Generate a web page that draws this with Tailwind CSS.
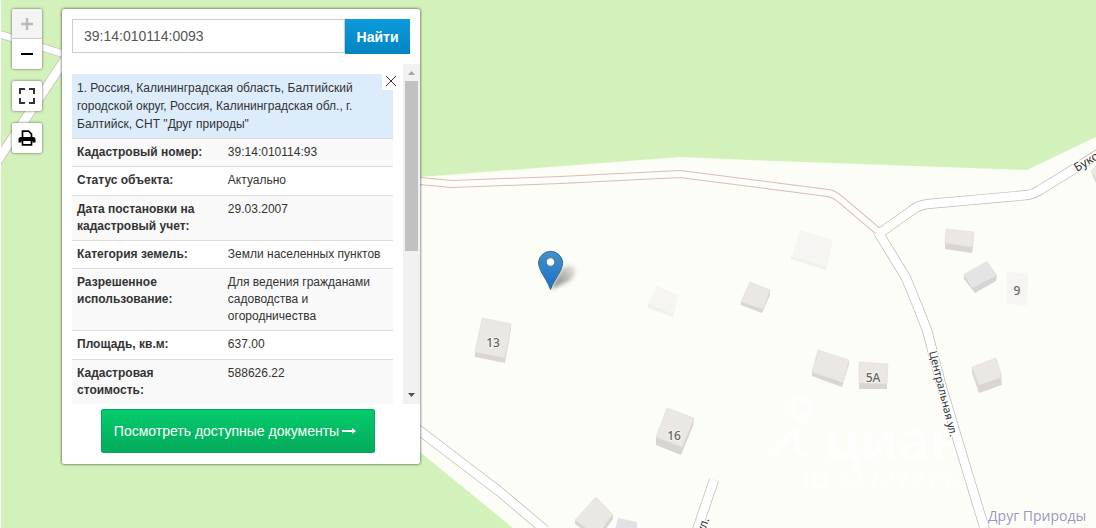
<!DOCTYPE html>
<html lang="ru">

<head>
  <meta charset="UTF-8">
  <meta name="viewport" content="width=device-width, initial-scale=1.0">
  <title>Кадастровая карта</title>
  <script src="https://cdn.jsdelivr.net/npm/@tailwindcss/browser@4"></script>
</head>

<body class="relative h-screen overflow-hidden bg-[#fcfdf6] font-['Liberation_Sans',sans-serif] text-[#333]">

  <!-- Map canvas -->
  <svg class="absolute inset-0" width="1096" height="528" viewBox="0 0 1096 528" role="img" aria-label="Карта">
    <defs>
      <linearGradient id="pin" x1="0" y1="0" x2="0" y2="1">
        <stop offset="0" stop-color="#4391c9" />
        <stop offset="1" stop-color="#1b6fc4" />
      </linearGradient>
      <linearGradient id="pinShadow" x1="0" y1="1" x2="1" y2="0">
        <stop offset="0" stop-color="#000" stop-opacity=".55" />
        <stop offset="1" stop-color="#000" stop-opacity=".05" />
      </linearGradient>
      <filter id="soft" x="-50%" y="-50%" width="200%" height="200%">
        <feGaussianBlur stdDeviation="2" />
      </filter>
    </defs>

    <!-- woods -->
    <path fill="#d3f2bb" d="M0 0H1096V137L1027 170L750 160L680 157L420 177L240 192V330L420 452L513 528H0Z" />

    <!-- watermark -->
    <g opacity=".7">
      <g fill="none" stroke="#fff" stroke-width="6" stroke-linejoin="round">
        <circle cx="802" cy="408" r="9" />
        <path d="M802 417V425M769 456L795 430L798 450L808 456" />
      </g>
      <text x="825" y="459" font-family="Open Sans, sans-serif" font-weight="700" font-size="52" fill="#fff">циан</text>
      <text x="803" y="489" font-family="Open Sans, sans-serif" font-size="26" fill="#fff">ID 347777774</text>
    </g>

    <!-- roads: casing first, then fill -->
    <g fill="none" stroke-linejoin="round">
      <g stroke="#bfb8b4" stroke-width="10">
        <path d="M-4 33L80 59" stroke-width="8" />
        <path d="M-4 163L66 58" />
        <path d="M400 417L420 431L500 492L545 530" />
        <path d="M714 480L696 533" />
        <path d="M880 233L911 211Q918 205 928 204L1028 195Q1034 194 1040 190L1100 153" />
        <path d="M878 232L905 276Q908 282 927 330L941 384L958 441L986 533" />
      </g>
      <path stroke="#d9bcb0" stroke-width="8" d="M400 179L420 181L452 184L560 180L680 174L828 193Q834 194 840 199L879 232" />
      <path stroke="#fdfcf9" stroke-width="6" d="M400 179L420 181L452 184L560 180L680 174L828 193Q834 194 840 199L879 232" />
      <g stroke="#fff" stroke-width="8.6">
        <path d="M-4 33L80 59" stroke-width="6.8" />
        <path d="M-4 163L66 58" />
        <path d="M400 417L420 431L500 492L545 530" />
        <path d="M714 480L696 533" />
        <path d="M880 233L911 211Q918 205 928 204L1028 195Q1034 194 1040 190L1100 153" />
        <path d="M878 232L905 276Q908 282 927 330L941 384L958 441L986 533" />
      </g>
    </g>

    <!-- buildings: walls, then roof -->
    <g fill="#d9d6d2">
      <path d="M475 351L505 357L511 324L511 329L505 363L475 357Z" />
      <path d="M741 301L763 309L770 290V295L762 313L741 305Z" />
      <path d="M656 437L682 447L694 418L693 426L681 455L656 445Z" />
      <path d="M812 372L843 382L849 360V364L842 387L812 376Z" />
      <path d="M859 383H887V389H859Z" />
      <path d="M972 367L979 385L1001 377L1002 385L979 393L972 373Z" />
      <path d="M945 243L972 247L974 232L973 246L972 253L945 249Z" />
      <path d="M575 520L598 533L613 514V519L598 540L575 524Z" />
      <path d="M1091 172L1096 183V178Z" />
    </g>
    <g fill="#ebe8e4" stroke="#dfdcd8" stroke-width=".6">
      <path d="M482 318L511 324L505 358L475 352Z" />
      <path d="M750 282L770 290L763 309L741 302Z" />
      <path d="M667 408L694 418L682 447L656 437Z" />
      <path d="M818 350L849 360L843 381L812 372Z" />
      <path d="M859 362L888 364L887 384L859 383Z" />
      <path d="M972 367L996 358L1002 377L979 385Z" />
      <path d="M946 229L974 232L972 247L945 243Z" />
      <path d="M596 497L613 515L594 534L575 520Z" />
      <path d="M1098 164L1091 171L1098 180Z" />
    </g>
    <path fill="#d4d4d5" d="M964 274L972 287L997 275L996 281L975 293L964 279Z" />
    <path fill="#e4e4e6" d="M987 261L997 275L973 288L964 274Z" />
    <path fill="#e2e2e5" d="M618 518L637 522V530H615Z" />
    <g fill="#f1f0eb">
      <path d="M648 303L673 313L678 295L673 317L648 308Z" />
      <path d="M791 256L826 266L833 240L826 270L791 259Z" />
    </g>
    <g fill="#f6f5f1">
      <path d="M657 286L678 295L673 314L648 304Z" />
      <path d="M800 230L833 240L826 267L792 256Z" />
      <path d="M1007 272L1028 273L1027 305L1006 304Z" />
    </g>

    <!-- labels -->
    <g font-family="Noto Sans, sans-serif" font-size="12" font-weight="500" fill="#666" text-anchor="middle" stroke="#f5f3f0" stroke-width="2" paint-order="stroke">
      <text x="493" y="347">13</text>
      <text x="674" y="440">16</text>
      <text x="873" y="382">5А</text>
      <text x="1017" y="295">9</text>
    </g>
    <g font-family="Noto Sans, sans-serif" font-size="12" fill="#333" stroke="#fff" stroke-width="2" paint-order="stroke">
      <text transform="translate(1077 172) rotate(-31)">Буковая</text>
      <text transform="translate(929 352) rotate(76)" font-size="11">Центральная ул.</text>
      <text transform="translate(704 534) rotate(-70)">ул.</text>
    </g>
    <text x="988" y="521" font-family="Open Sans, sans-serif" font-size="14" fill="#9a97bd" stroke="#fff" stroke-width="2" paint-order="stroke">Друг Природы</text>

    <!-- marker -->
    <path d="M551 289L561 269Q570 262 575 268Q577 275 569 281Z" fill="url(#pinShadow)" filter="url(#soft)" />
    <path d="M550.500 289.500C547 279 538.500 271 538.500 262A12.200 12.200 0 0 1 562.700 262C562.700 271 554 279 550.500 289.500Z" fill="url(#pin)" stroke="#2e6c97" />
    <circle cx="550.500" cy="262" r="4.200" fill="#fff" stroke="#2e6c97" stroke-width=".7" />
    <path d="M.5 0V528" stroke="#fff" />
  </svg>

  <div class="relative flex items-start gap-5 pt-[9px] pl-3">
    <!-- Map controls -->
    <nav class="flex flex-col gap-3" aria-label="Управление картой">
      <div class="flex flex-col overflow-hidden rounded-xs bg-white shadow-[0_0_3px_rgba(0,0,0,0.6)]">
        <button type="button" disabled aria-label="Приблизить" class="flex h-[30px] w-[30px] items-center justify-center border-b border-[#ccc] bg-[#f4f4f4] text-[#bbb]">
          <svg width="14" height="14" viewBox="0 0 14 14" stroke="currentColor" stroke-width="2.500"><path d="M7 1V13M1 7H13" /></svg>
        </button>
        <button type="button" aria-label="Отдалить" class="flex h-[30px] w-[30px] items-center justify-center text-black">
          <svg width="14" height="14" viewBox="0 0 14 14" stroke="currentColor" stroke-width="2"><path d="M1 7H13" /></svg>
        </button>
      </div>
      <button type="button" aria-label="Во весь экран" class="flex h-[30px] w-[30px] items-center justify-center rounded-xs bg-white text-[#333] shadow-[0_0_3px_rgba(0,0,0,0.6)]">
        <svg width="16" height="16" viewBox="0 0 16 16" fill="none" stroke="currentColor" stroke-width="2"><path d="M1 6V1H6M10 1H15V6M15 10V15H10M6 15H1V10" /></svg>
      </button>
      <button type="button" aria-label="Печать" class="flex h-[30px] w-[30px] items-center justify-center rounded-xs bg-white text-black shadow-[0_0_3px_rgba(0,0,0,0.6)]">
        <svg width="18" height="16" viewBox="0 0 18 16">
          <path fill="currentColor" d="M3 7H15Q17.500 7 17.500 9V12.500H14.500V11H3.500V12.500H.5V9Q.5 7 3 7Z" />
          <path fill="none" stroke="currentColor" stroke-width="1.700" d="M4.500 8V1.200H10.500L13.500 4V8M4.500 11V14.800H13.500V11" />
        </svg>
      </button>
    </nav>

    <!-- Search panel -->
    <section class="w-[358px] rounded-xs bg-white pt-[10px] pb-[11px] shadow-[0_0_3px_rgba(0,0,0,0.8)]">
      <form class="flex px-[10px]">
        <label for="cadNumber" class="sr-only">Кадастровый номер</label>
        <input id="cadNumber" type="text" value="39:14:010114:0093" class="h-[34px] min-w-0 flex-1 border border-[#ccc] px-[11px] text-sm text-[#555]">
        <button type="submit" class="h-[35px] w-[65px] bg-linear-to-b from-[#0d9bdc] to-[#0285c2] text-sm font-bold text-white">Найти</button>
      </form>

      <div class="mt-[10px] flex h-[340px] overflow-hidden text-xs">
        <div class="relative flex-1 px-[10px] pt-[10px]">
          <p class="bg-[#dcecfb] p-[5px] pr-8 leading-[18px]">1. Россия, Калининградская область, Балтийский городской округ, Россия, Калининградская обл., г. Балтийск, СНТ "Друг природы"</p>
          <button type="button" aria-label="Закрыть" class="absolute top-2 right-[3px] flex h-[18px] w-[18px] items-center justify-center bg-white">
            <svg width="12" height="12" viewBox="0 0 12 12" stroke="#333"><path d="M1 1L11 11M11 1L1 11" /></svg>
          </button>
          <table class="w-full table-fixed leading-[17px] [&_td]:p-[5px] [&_th]:p-[5px] [&_th]:text-left [&_tr]:border-t [&_tr]:border-[#ddd] [&_tr]:align-top [&_tr:nth-child(odd)]:bg-[#f9f9f9]">
            <colgroup>
              <col class="w-[47%]">
              <col>
            </colgroup>
            <tbody>
              <tr><th scope="row">Кадастровый номер:</th><td>39:14:010114:93</td></tr>
              <tr class="h-[29px]"><th scope="row">Статус объекта:</th><td>Актуально</td></tr>
              <tr><th scope="row">Дата постановки на кадастровый учет:</th><td>29.03.2007</td></tr>
              <tr><th scope="row">Категория земель:</th><td>Земли населенных пунктов</td></tr>
              <tr><th scope="row">Разрешенное использование:</th><td>Для ведения гражданами садоводства и огородничества</td></tr>
              <tr class="h-[29px]"><th scope="row">Площадь, кв.м:</th><td>637.00</td></tr>
              <tr><th scope="row">Кадастровая стоимость:</th><td>588626.22</td></tr>
            </tbody>
          </table>
        </div>
        <!-- scrollbar -->
        <div class="flex w-[17px] flex-col items-center bg-[#f1f1f1]" aria-hidden="true">
          <svg width="17" height="17" viewBox="0 0 17 17"><path fill="#a3a3a3" d="M5 11L8.500 7L12 11Z" /></svg>
          <div class="h-[170px] w-[13px] bg-[#c1c1c1]"></div>
          <svg class="mt-auto" width="17" height="17" viewBox="0 0 17 17"><path fill="#505050" d="M5 6L8.500 10L12 6Z" /></svg>
        </div>
      </div>

      <div class="mt-[5px] flex justify-center pr-[6px]">
        <a href="#" class="flex h-11 items-center gap-[3px] rounded-xs border border-[#08a457] bg-linear-to-b from-[#03cb6b] to-[#04ab5c] pr-[18px] pl-3 text-sm text-white">
          Посмотреть доступные документы
          <svg width="14" height="8" viewBox="0 0 14 8" fill="#fff"><path d="M0 3H10V1L14 4L10 7V5H0Z" /></svg>
        </a>
      </div>
    </section>
  </div>

</body>

</html>
